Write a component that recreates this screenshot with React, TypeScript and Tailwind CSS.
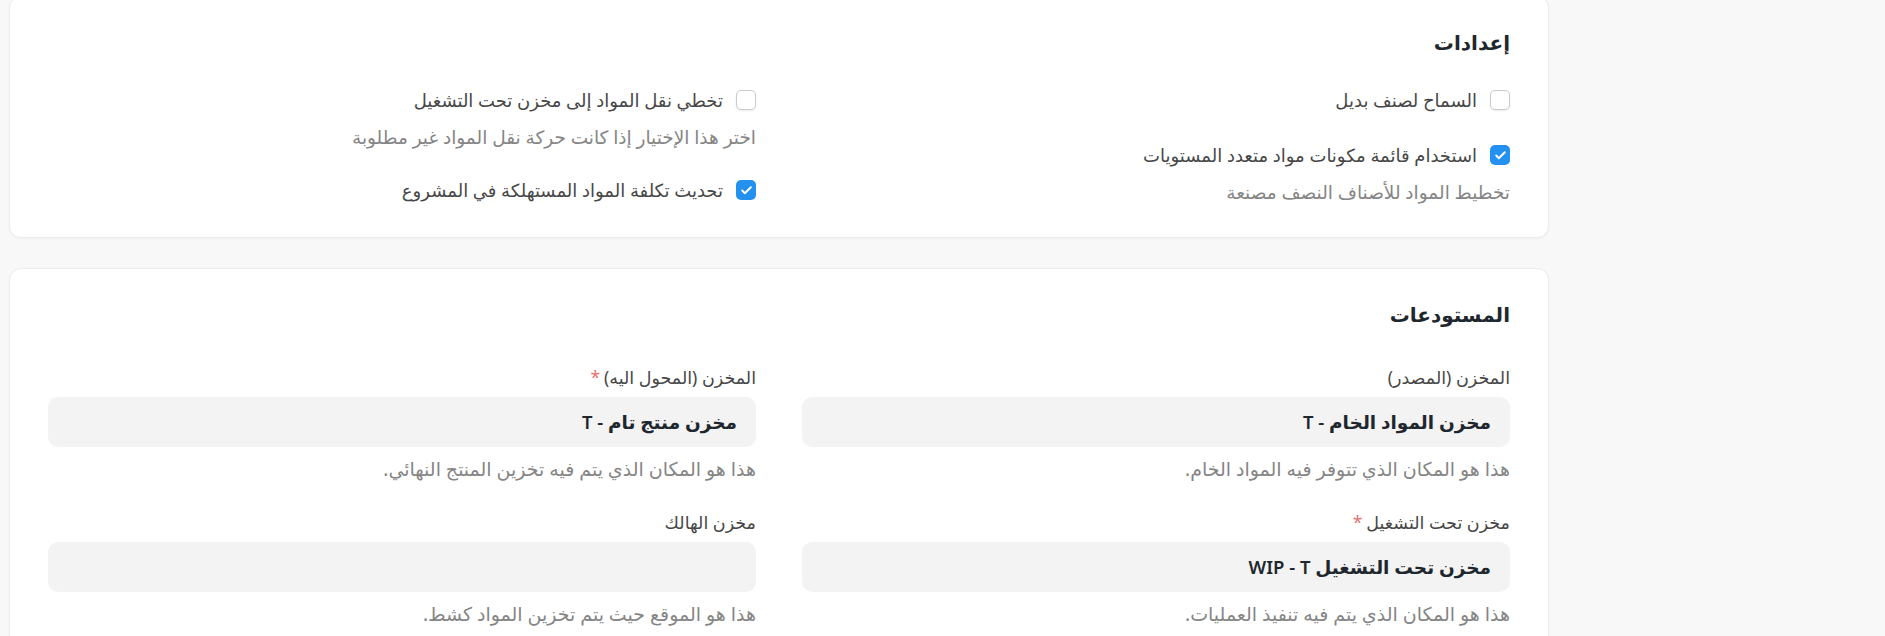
import { Check } from 'lucide-react';

type CheckItem = { label: string; checked?: boolean; desc?: string };
type Field = { label: string; required?: boolean; value?: string; help: string };

const settingsRight: CheckItem[] = [
    { label: 'السماح لصنف بديل' },
    { label: 'استخدام قائمة مكونات مواد متعدد المستويات', checked: true, desc: 'تخطيط المواد للأصناف النصف مصنعة' },
];

const settingsLeft: CheckItem[] = [
    { label: 'تخطي نقل المواد إلى مخزن تحت التشغيل', desc: 'اختر هذا الإختيار إذا كانت حركة نقل المواد غير مطلوبة' },
    { label: 'تحديث تكلفة المواد المستهلكة في المشروع', checked: true },
];

const warehousesRight: Field[] = [
    { label: 'المخزن (المصدر)', value: 'مخزن المواد الخام - T', help: 'هذا هو المكان الذي تتوفر فيه المواد الخام.' },
    { label: 'مخزن تحت التشغيل', required: true, value: 'مخزن تحت التشغيل WIP - T', help: 'هذا هو المكان الذي يتم فيه تنفيذ العمليات.' },
];

const warehousesLeft: Field[] = [
    { label: 'المخزن (المحول اليه)', required: true, value: 'مخزن منتج تام - T', help: 'هذا هو المكان الذي يتم فيه تخزين المنتج النهائي.' },
    { label: 'مخزن الهالك', help: 'هذا هو الموقع حيث يتم تخزين المواد كشط.' },
];

function Checkbox({ checked }: { checked?: boolean }) {
    return checked ? (
        <span className="flex h-5 w-5 shrink-0 items-center justify-center rounded-[5px] bg-[#2490ef]">
            <Check className="h-[13px] w-[13px] text-white" strokeWidth={3.5} />
        </span>
    ) : (
        <span className="h-5 w-5 shrink-0 rounded-[5px] border border-[#c8ccd0] bg-white shadow-[0_1px_2px_rgba(0,0,0,0.08)]" />
    );
}

function CheckColumn({ items }: { items: CheckItem[] }) {
    return (
        <div className="flex flex-col gap-[31px]">
            {items.map((it) => (
                <div key={it.label}>
                    <label className="flex h-6 items-center gap-[13px] text-[18px] text-[#474747]">
                        <Checkbox checked={it.checked} />
                        <span>{it.label}</span>
                    </label>
                    {it.desc && <p className="mt-[15px] text-[18.5px] leading-5 text-[#858585]">{it.desc}</p>}
                </div>
            ))}
        </div>
    );
}

function FieldColumn({ fields }: { fields: Field[] }) {
    return (
        <div className="flex flex-col gap-[33px]">
            {fields.map((f) => (
                <div key={f.label}>
                    <div className="mb-[10px] text-[17.5px] leading-5 text-[#474747]">
                        {f.label}
                        {f.required && <span className="mr-1 text-[#e57373]">*</span>}
                    </div>
                    <div className="flex h-[50px] items-center rounded-[10px] bg-[#f3f3f3] pl-5 pr-[19px] text-[18.5px] font-semibold text-[#1f272e]">
                        {f.value}
                    </div>
                    <p className="mt-3 text-[19px] leading-5 text-[#858585]">{f.help}</p>
                </div>
            ))}
        </div>
    );
}

export default function App() {
    return (
        <div
            dir="rtl"
            className="h-[636px] overflow-hidden bg-[#f8f8f8]"
            style={{ fontFamily: '"Noto Sans", "DejaVu Sans", sans-serif' }}
        >
            <div className="ml-[9px] mr-[336px] flex flex-col gap-[30px]">
                {/* Settings */}
                <section className="-mt-1 rounded-xl border border-[#ececec] bg-white px-[38px] pb-[35px] pt-8 shadow-[0_1px_3px_rgba(0,0,0,0.04)]">
                    <h2 className="mb-[31px] text-xl font-semibold leading-7 text-[#1f272e]">إعدادات</h2>
                    <div className="grid grid-cols-2 gap-x-[46px]">
                        <CheckColumn items={settingsRight} />
                        <CheckColumn items={settingsLeft} />
                    </div>
                </section>

                {/* Warehouses */}
                <section className="rounded-xl border border-[#ececec] bg-white px-[38px] pb-10 pt-8 shadow-[0_1px_3px_rgba(0,0,0,0.04)]">
                    <h2 className="mb-[38px] text-xl font-semibold leading-7 text-[#1f272e]">المستودعات</h2>
                    <div className="grid grid-cols-2 gap-x-[46px]">
                        <FieldColumn fields={warehousesRight} />
                        <FieldColumn fields={warehousesLeft} />
                    </div>
                </section>
            </div>
        </div>
    );
}
